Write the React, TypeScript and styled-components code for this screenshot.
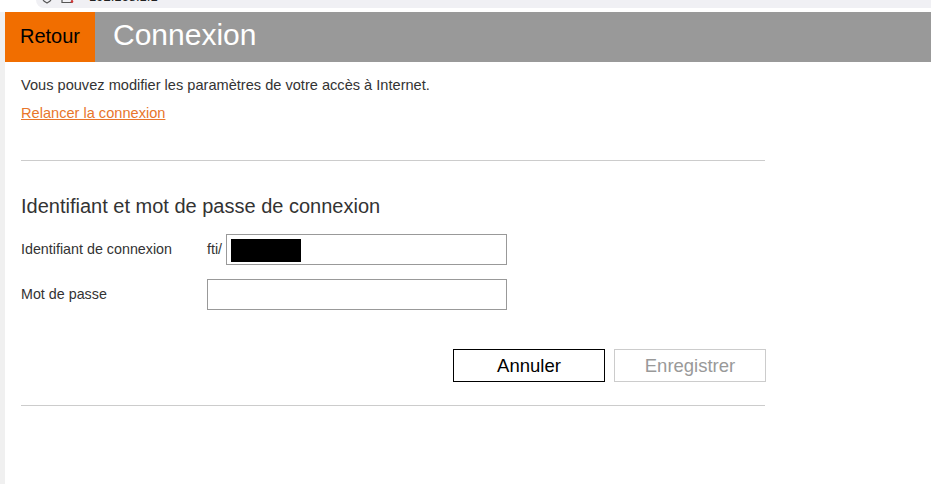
import * as React from "react";
import styled, { createGlobalStyle } from "styled-components";

const GlobalStyle = createGlobalStyle`
  html, body {
    margin: 0;
    padding: 0;
    background: #ffffff;
    font-family: "Liberation Sans", Arial, sans-serif;
  }
`;

const App: React.FC = () => {
  return (
    <StyledPage>
      <GlobalStyle />
      <StyledBrowserBar>
        <StyledUrlPill>
          <svg width="12" height="8" viewBox="0 0 12 8">
            <path
              d="M2 -4v3.500C2 1 4 2 6 3c2-1 4-2 4-3.500V-4"
              fill="none"
              stroke="#555"
              strokeWidth="1.2"
            />
          </svg>
          <svg width="14" height="8" viewBox="0 0 14 8">
            <path d="M1 -4v6.500h10V-4" fill="none" stroke="#555" strokeWidth="1.2" />
            <circle cx="11" cy="1.500" r="1.300" fill="#d33" />
          </svg>
          <StyledUrl>192.168.1.1</StyledUrl>
        </StyledUrlPill>
      </StyledBrowserBar>
      <StyledMain>
        <StyledHeader>
          <StyledBack>Retour</StyledBack>
          <StyledTitle>Connexion</StyledTitle>
        </StyledHeader>
        <StyledContent>
          <StyledIntro>
            Vous pouvez modifier les paramètres de votre accès à Internet.
          </StyledIntro>
          <StyledLink href="#">Relancer la connexion</StyledLink>
          <StyledDivider />
          <StyledHeading>Identifiant et mot de passe de connexion</StyledHeading>
          <StyledRow>
            <StyledLabel>Identifiant de connexion</StyledLabel>
            <StyledPrefix>fti/</StyledPrefix>
            <StyledInputBox width={281}>
              <StyledMask />
            </StyledInputBox>
          </StyledRow>
          <StyledRow>
            <StyledLabel>Mot de passe</StyledLabel>
            <StyledInputBox width={300} />
          </StyledRow>
          <StyledActions>
            <StyledButton>Annuler</StyledButton>
            <StyledButton disabled>Enregistrer</StyledButton>
          </StyledActions>
          <StyledBottomDivider />
        </StyledContent>
      </StyledMain>
    </StyledPage>
  );
};

export default App;

const StyledPage = styled.div`
  width: 931px;
  height: 484px;
  overflow: hidden;
  background: #ffffff;
  display: flex;
  flex-direction: column;
`;

const StyledBrowserBar = styled.div`
  height: 12px;
  flex-shrink: 0;
  background: #ffffff;
  padding-left: 36px;
  overflow: hidden;
`;

const StyledUrlPill = styled.div`
  height: 8px;
  background: #f0f0f4;
  border-radius: 0 0 0 8px;
  display: flex;
  align-items: flex-start;
  gap: 8px;
  padding-left: 5px;
  overflow: hidden;
  svg {
    flex-shrink: 0;
  }
`;

const StyledUrl = styled.span`
  font-size: 13px;
  line-height: 12px;
  margin-top: -9px;
  margin-left: 6px;
  color: #222;
  display: block;
`;

const StyledMain = styled.div`
  flex: 1;
  border-left: 5px solid #f0f0f0;
  display: flex;
  flex-direction: column;
`;

const StyledHeader = styled.div`
  height: 50px;
  background: #999999;
  display: flex;
  align-items: center;
`;

const StyledBack = styled.div`
  width: 90px;
  height: 100%;
  background: #f16e00;
  color: #000;
  font-size: 20px;
  display: flex;
  align-items: center;
  justify-content: center;
  padding-bottom: 2px;
  box-sizing: border-box;
`;

const StyledTitle = styled.div`
  color: #fff;
  font-size: 30px;
  margin-left: 18px;
  padding-bottom: 5px;
`;

const StyledContent = styled.div`
  width: 744px;
  margin-left: 16px;
  display: flex;
  flex-direction: column;
`;

const StyledIntro = styled.div`
  font-size: 14.6px;
  line-height: 16px;
  color: #333;
  margin-top: 15px;
`;

const StyledLink = styled.a`
  font-size: 14.6px;
  line-height: 16px;
  color: #e8762c;
  margin-top: 12px;
  align-self: flex-start;
`;

const StyledDivider = styled.div`
  height: 1px;
  background: #cccccc;
  margin-top: 39px;
`;

const StyledHeading = styled.div`
  font-size: 20px;
  line-height: 22px;
  color: #333;
  margin-top: 34px;
  margin-bottom: 3px;
`;

const StyledRow = styled.div`
  display: flex;
  align-items: center;
  height: 31px;
  margin-top: 14px;
`;

const StyledLabel = styled.div`
  width: 186px;
  font-size: 14.3px;
  color: #333;
  padding-bottom: 1px;
`;

const StyledPrefix = styled.div`
  width: 19px;
  font-size: 14.3px;
  color: #333;
  white-space: nowrap;
  padding-bottom: 1px;
`;

const StyledInputBox = styled.div<{ width: number }>`
  width: ${(props) => props.width}px;
  height: 31px;
  box-sizing: border-box;
  border: 1px solid #999999;
  background: #fff;
  padding: 4px;
`;

const StyledMask = styled.div`
  width: 70px;
  height: 23px;
  background: #000;
`;

const StyledActions = styled.div`
  display: flex;
  justify-content: flex-end;
  gap: 9px;
  margin-top: 39px;
  margin-right: -1px;
`;

const StyledButton = styled.button`
  width: 152px;
  height: 33px;
  box-sizing: border-box;
  background: #fff;
  border: 1px solid #000;
  color: #000;
  font-family: inherit;
  font-size: 18.500px;
  padding: 0;
  &:disabled {
    border: 1px solid #cccccc;
    color: #999999;
  }
`;

const StyledBottomDivider = styled.div`
  height: 1px;
  background: #cccccc;
  margin-top: 23px;
`;
